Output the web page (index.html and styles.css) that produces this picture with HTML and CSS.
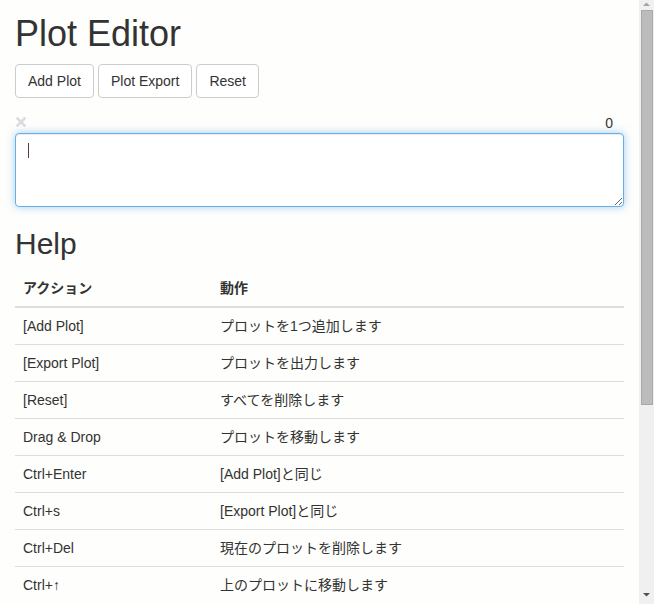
FILE: index.html
```html
<!DOCTYPE html>
<html lang="ja">
<head>
<meta charset="utf-8">
<title>Plot Editor</title>
<link rel="stylesheet" href="styles.css">
</head>
<body>
<div class="container">
  <h1 class="title">Plot Editor</h1>
  <div class="toolbar">
    <button class="btn" type="button">Add Plot</button>
    <button class="btn" type="button">Plot Export</button>
    <button class="btn" type="button">Reset</button>
  </div>
  <div class="plot-head">
    <svg class="remove" width="10" height="10" viewBox="0 0 10 10" aria-hidden="true">
      <path d="M1.5 1.5 L8.5 8.5 M8.5 1.5 L1.5 8.5" stroke="#dcdcdc" stroke-width="2.6" stroke-linecap="square"/>
    </svg>
    <span class="count">0</span>
  </div>
  <div class="input-wrap">
    <textarea class="plot-input" rows="3"></textarea>
    <span class="caret" aria-hidden="true"></span>
  </div>

  <h2 class="section-title">Help</h2>
  <table class="help-table">
    <thead>
      <tr><th class="col-action">アクション</th><th>動作</th></tr>
    </thead>
    <tbody>
      <tr><td>[Add Plot]</td><td>プロットを1つ追加します</td></tr>
      <tr><td>[Export Plot]</td><td>プロットを出力します</td></tr>
      <tr><td>[Reset]</td><td>すべてを削除します</td></tr>
      <tr><td>Drag &amp; Drop</td><td>プロットを移動します</td></tr>
      <tr><td>Ctrl+Enter</td><td>[Add Plot]と同じ</td></tr>
      <tr><td>Ctrl+s</td><td>[Export Plot]と同じ</td></tr>
      <tr><td>Ctrl+Del</td><td>現在のプロットを削除します</td></tr>
      <tr><td>Ctrl+↑</td><td>上のプロットに移動します</td></tr>
    </tbody>
  </table>
</div>

<div class="scrollbar" aria-hidden="true">
  <svg class="sb-arrow sb-up" width="15" height="10" viewBox="0 0 15 10">
    <path d="M4 6 L11 6 L7.5 2.5 Z" fill="#a3a3a3"/>
  </svg>
  <div class="sb-thumb"></div>
  <svg class="sb-arrow sb-down" width="15" height="10" viewBox="0 0 15 10">
    <path d="M4 2 L11 2 L7.5 5.5 Z" fill="#505050"/>
  </svg>
</div>
</body>
</html>
```
FILE: styles.css
```css
html {
  background: #fefefc;
}
body {
  margin: 0 15px 0 0;
  background: #fefefc;
  font-family: "Liberation Sans", Arial, "Noto Sans CJK JP", sans-serif;
  font-size: 14px;
  line-height: 20px;
  color: #333;
}

.container {
  padding: 0 15px;
}

.title {
  margin: 14px 0 10px;
  font-size: 36px;
  font-weight: 500;
  line-height: 1.1;
}

.toolbar {
  display: flex;
  gap: 4px;
  margin-bottom: 15px;
}

.btn {
  display: inline-block;
  padding: 6px 12px;
  font-family: inherit;
  font-size: 14px;
  line-height: 20px;
  color: #333;
  background: #fff;
  border: 1px solid #ccc;
  border-radius: 4px;
  cursor: pointer;
}

.plot-head {
  display: flex;
  justify-content: space-between;
  align-items: flex-start;
  height: 20px;
  padding: 0 11px 0 1px;
}
.remove {
  display: block;
  margin-top: 4px;
}
.count {
  line-height: 20px;
}

.input-wrap {
  position: relative;
}
.plot-input {
  display: block;
  box-sizing: border-box;
  width: 100%;
  height: 74px;
  margin: 0;
  padding: 6px 12px;
  font-family: inherit;
  font-size: 14px;
  line-height: 20px;
  color: #333;
  background: #fff;
  border: 1px solid #66afe9;
  border-radius: 4px;
  outline: 0;
  box-shadow: inset 0 1px 1px rgba(0, 0, 0, .075), 0 0 8px rgba(102, 175, 233, .6);
  resize: vertical;
}
.caret {
  position: absolute;
  left: 13px;
  top: 10px;
  width: 1px;
  height: 15px;
  background: #5a3a3a;
}

.section-title {
  margin: 20px 0 10px;
  font-size: 30px;
  font-weight: 500;
  line-height: 1.1;
}

.help-table {
  width: 100%;
  border-collapse: collapse;
  border-spacing: 0;
  margin: 0;
}
.help-table th {
  padding: 8px;
  text-align: left;
  font-weight: bold;
  line-height: 20px;
  vertical-align: bottom;
  border-bottom: 2px solid #ddd;
}
.help-table td {
  padding: 8px;
  line-height: 20px;
  vertical-align: top;
  border-top: 1px solid #ddd;
}
.help-table .col-action {
  width: 181px;
}

/* window scrollbar drawn over the right edge */
.scrollbar {
  position: fixed;
  top: 0;
  right: 0;
  width: 15px;
  height: 100%;
  background: #f0f0f0;
  display: flex;
  flex-direction: column;
}
.sb-arrow {
  display: block;
  flex: none;
}
.sb-thumb {
  flex: none;
  height: 395px;
  margin: 0 1px 0 2px;
  box-sizing: border-box;
  background: #bcbcbc;
  border: 1px solid #a9a9a9;
}
.sb-down {
  margin-top: auto;
  margin-bottom: 3px;
}
```
